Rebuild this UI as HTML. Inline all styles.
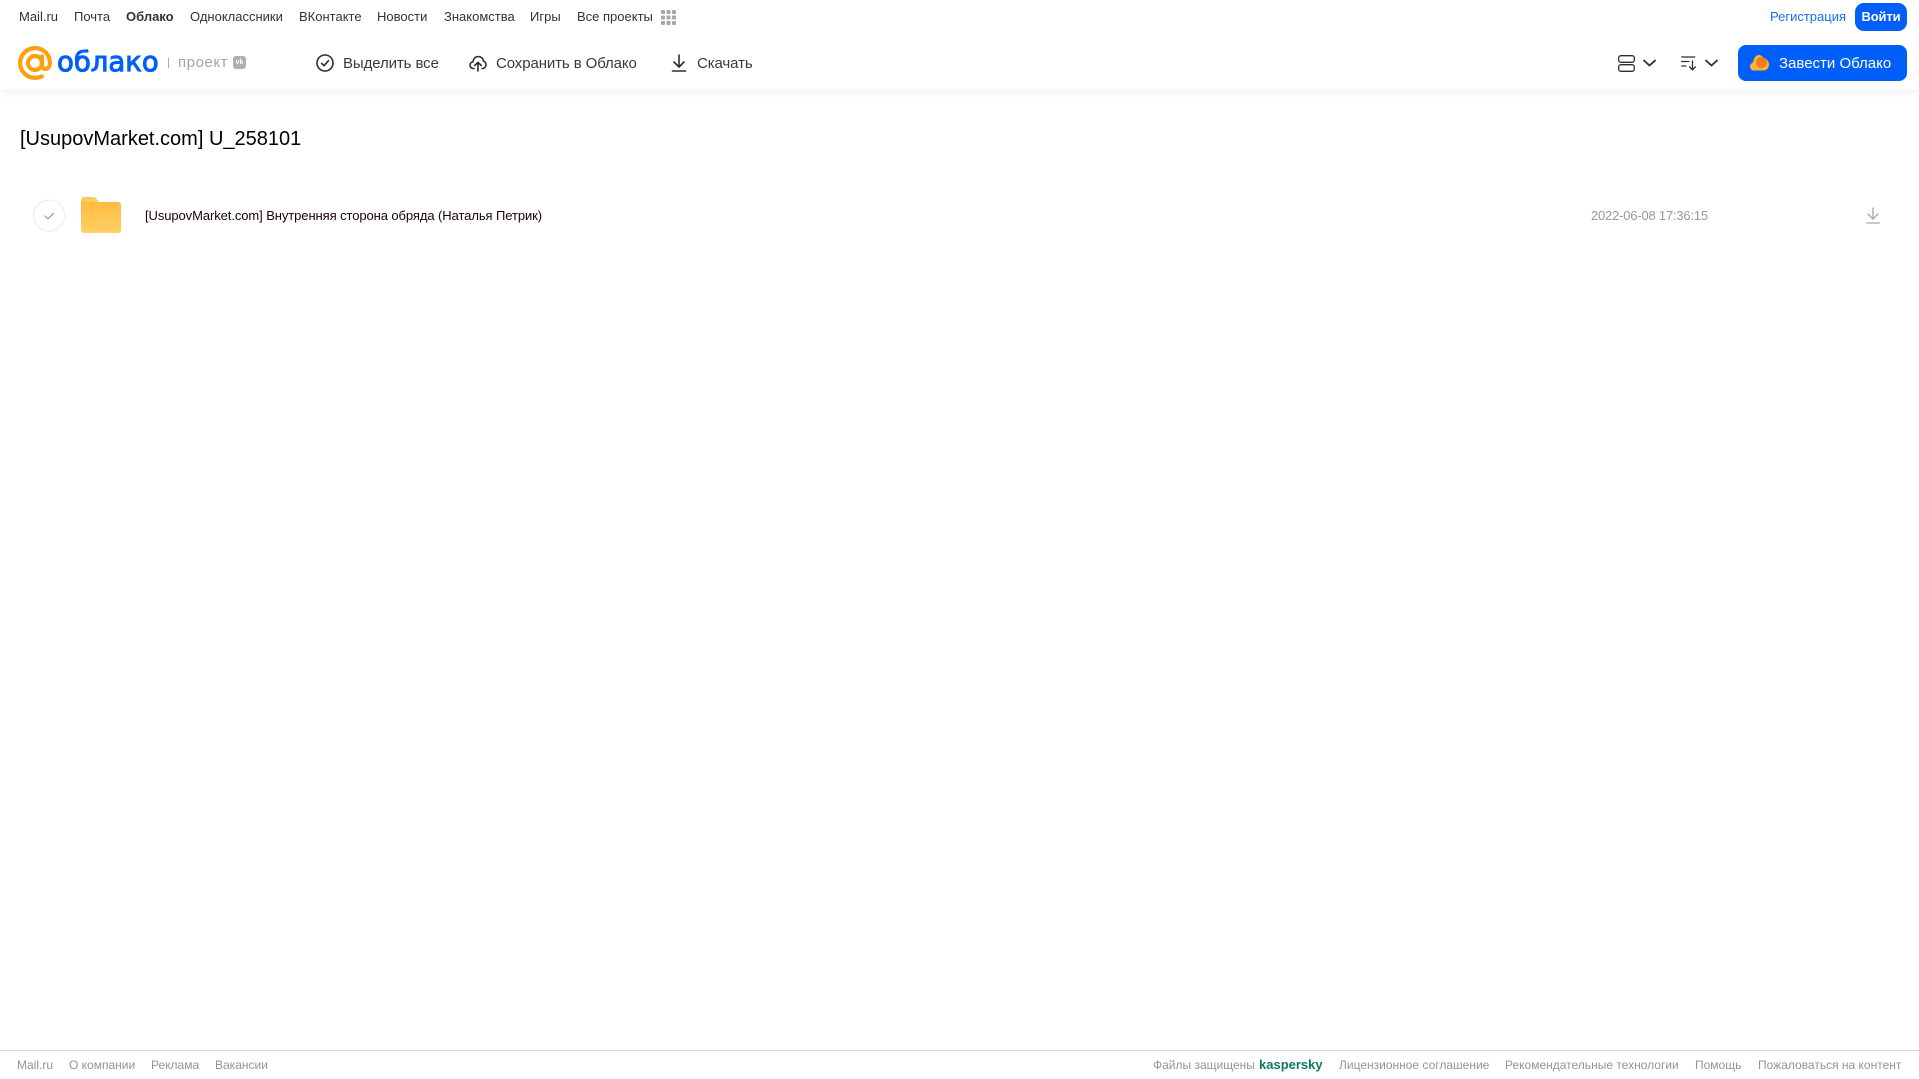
<!DOCTYPE html>
<html lang="ru">
<head>
<meta charset="utf-8">
<title>Облако</title>
<style>
html,body{margin:0;padding:0;background:#fff;}
body{width:1919px;height:1079px;position:relative;overflow:hidden;font-family:"Liberation Sans",sans-serif;}
.t{position:absolute;white-space:nowrap;line-height:16px;}
.n{top:9px;font-size:13px;color:#333;}
.h{top:55px;font-size:15px;line-height:18px;color:#3a3a3a;letter-spacing:-.1px;}
.f{top:1057px;font-size:12px;color:#949494;}
svg{position:absolute;overflow:visible;}
#hdr{position:absolute;left:0;top:0;width:1919px;height:90px;background:#fff;box-shadow:0 2px 8px rgba(0,0,0,.07);}
</style>
</head>
<body>
<div id="hdr"></div>

<span class="t n" style="left:19px">Mail.ru</span>
<span class="t n" style="left:74px">Почта</span>
<span class="t n" style="left:126px;font-weight:bold">Облако</span>
<span class="t n" style="left:190px">Одноклассники</span>
<span class="t n" style="left:299px">ВКонтакте</span>
<span class="t n" style="left:377px">Новости</span>
<span class="t n" style="left:444px">Знакомства</span>
<span class="t n" style="left:530px">Игры</span>
<span class="t n" style="left:577px">Все проекты</span>
<svg style="left:661px;top:10px" width="15" height="15" viewBox="0 0 15 15" fill="#a6a6a6">
<rect x="0" y="0" width="4" height="4" rx="1"/><rect x="5.5" y="0" width="4" height="4" rx="1"/><rect x="11" y="0" width="4" height="4" rx="1"/>
<rect x="0" y="5.5" width="4" height="4" rx="1"/><rect x="5.5" y="5.5" width="4" height="4" rx="1"/><rect x="11" y="5.5" width="4" height="4" rx="1"/>
<rect x="0" y="11" width="4" height="4" rx="1"/><rect x="5.5" y="11" width="4" height="4" rx="1"/><rect x="11" y="11" width="4" height="4" rx="1"/>
</svg>

<span class="t n" style="left:1770px;color:#1a6ff0">Регистрация</span>
<div style="position:absolute;left:1855px;top:3px;width:52px;height:28px;background:#005ff9;border-radius:9px;color:#fff;font-size:13px;font-weight:bold;line-height:27px;text-align:center;letter-spacing:-.15px">Войти</div>

<!-- logo -->
<svg style="left:18px;top:46px" width="34" height="34" viewBox="0 0 34 34" fill="none" stroke="#ffa10f" stroke-width="4.2" stroke-linecap="round">
<circle cx="17" cy="17" r="7"/>
<path d="M24 10.500v9c0 5 7.800 5 7.900-2.500C32 8.500 25.500 2.100 17 2.100 8.800 2.100 2.100 8.800 2.100 17S8.800 31.900 17 31.900c2.800 0 4.800-.5 6.800-1.500"/>
</svg>
<span class="t" style="left:57px;top:44px;font-family:'DejaVu Sans',sans-serif;font-size:27.5px;line-height:36px;color:#005ff9;-webkit-text-stroke:1px #005ff9">облако</span>
<div style="position:absolute;left:168px;top:58px;width:1px;height:10px;background:#aaa"></div>
<span class="t" style="left:178px;top:54px;font-size:15px;line-height:18px;color:#a5a5a5;letter-spacing:.55px">проект</span>
<div style="position:absolute;left:233px;top:56px;width:13px;height:13px;background:#b0b0b0;border-radius:3px;color:#fff;font-size:7px;font-weight:bold;line-height:13px;text-align:center">vk</div>

<!-- toolbar -->
<svg style="left:316px;top:54px" width="18" height="18" viewBox="0 0 18 18" fill="none" stroke="#2c2d2e" stroke-width="1.6" stroke-linecap="round" stroke-linejoin="round">
<circle cx="9" cy="9" r="8"/><path d="M5.600 9.300l2.400 2.400 4.500-5"/>
</svg>
<span class="t h" style="left:343px">Выделить все</span>
<svg style="left:469px;top:54px" width="18" height="18" viewBox="0 0 18 18" fill="none" stroke="#2c2d2e" stroke-width="1.6" stroke-linecap="round" stroke-linejoin="round">
<path d="M5 14.500H4.300C2.400 14.500 1 13 1 11.200c0-1.600 1.100-3 2.800-3.200C4.200 5 6.300 2.500 9.300 2.500c2.800 0 4.800 2 5.200 4.500 1.500.4 2.500 2.200 2.500 3.800 0 2-1.500 3.700-3.500 3.700H13"/>
<path d="M9 17V8.500M5.800 11.500L9 8.300l3.200 3.200"/>
</svg>
<span class="t h" style="left:496px">Сохранить в Облако</span>
<svg style="left:671px;top:54px" width="16" height="18" viewBox="0 0 16 18" fill="none" stroke="#2c2d2e" stroke-width="1.6" stroke-linecap="round" stroke-linejoin="round">
<path d="M8 1v11.500M3 8l5 5 5-5M1.500 17h13"/>
</svg>
<span class="t h" style="left:697px">Скачать</span>

<!-- view / sort -->
<svg style="left:1618px;top:55px" width="17" height="17" viewBox="0 0 17 17" fill="none" stroke="#2c2d2e" stroke-width="1.3">
<rect x=".7" y=".7" width="15.600" height="6.600" rx="2.200"/><rect x=".7" y="9.700" width="15.600" height="6.600" rx="2.200"/>
</svg>
<svg style="left:1643px;top:59px" width="13" height="8" viewBox="0 0 13 8" fill="none" stroke="#2c2d2e" stroke-width="1.8" stroke-linecap="round" stroke-linejoin="round"><path d="M1 1.500l5.500 5 5.500-5"/></svg>
<svg style="left:1681px;top:56px" width="17" height="15" viewBox="0 0 17 15" fill="none" stroke="#2c2d2e" stroke-width="1.300" stroke-linecap="round" stroke-linejoin="round">
<path d="M.8 1h13M.8 5.500h7M.8 10h4M11.500 5v8.500M8.500 10.800l3 3 3-3"/>
</svg>
<svg style="left:1705px;top:59px" width="13" height="8" viewBox="0 0 13 8" fill="none" stroke="#2c2d2e" stroke-width="1.8" stroke-linecap="round" stroke-linejoin="round"><path d="M1 1.500l5.500 5 5.500-5"/></svg>

<div style="position:absolute;left:1738px;top:45px;width:169px;height:36px;background:#005ff9;border-radius:8px"></div>
<svg style="left:1750px;top:54px" width="19" height="17" viewBox="0 0 19 17">
<path d="M4 16.500C1.800 16.500 0 14.800 0 12.500c0-2 1.300-3.500 3-3.900C3.400 4.500 6 1 8.500 1c2.500 0 3.800 1.200 4.800 3 3.200.3 5.700 3.300 5.700 6.500 0 3.500-2.500 6-5.500 6z" fill="#ffb13d"/>
<circle cx="11.500" cy="8.500" r="5.500" fill="#f4791f"/>
</svg>
<span class="t" style="left:1779px;top:55px;font-size:15px;line-height:18px;color:#fff">Завести Облако</span>

<!-- title -->
<span class="t" style="left:20px;top:126px;font-size:20px;line-height:26px;color:#000">[UsupovMarket.com] U_258101</span>

<!-- row -->
<svg style="left:33px;top:199px" width="33" height="33" viewBox="0 0 33 33" fill="none">
<circle cx="16" cy="16.500" r="15.500" stroke="#ececec"/>
<path d="M12 17l3 2.800 5.500-5.500" stroke="#a0a0a0" stroke-width="1.300" stroke-linecap="round" stroke-linejoin="round"/>
</svg>
<svg style="left:81px;top:197px" width="40" height="36" viewBox="0 0 40 36">
<defs><linearGradient id="g" x1="0" y1="0" x2="0" y2="1"><stop offset="0" stop-color="#ffbc40"/><stop offset="1" stop-color="#ffcf66"/></linearGradient></defs>
<path d="M0 3a3 3 0 0 1 3-3h9c2 0 3 1 4 2.500L18 5H0z" fill="#ffcb5c"/>
<path d="M0 5h37a3 3 0 0 1 3 3v25a3 3 0 0 1-3 3H3a3 3 0 0 1-3-3z" fill="url(#g)"/>
</svg>
<span class="t" style="left:145px;top:208px;font-size:13px;color:#1a0010;letter-spacing:-.085px">[UsupovMarket.com] Внутренняя сторона обряда (Наталья Петрик)</span>
<span class="t" style="left:1591px;top:208px;font-size:13px;color:#999;letter-spacing:-.2px">2022-06-08 17:36:15</span>
<svg style="left:1866px;top:207px" width="14" height="17" viewBox="0 0 14 17" fill="none" stroke="#a8a8a8" stroke-width="1.300" stroke-linecap="round" stroke-linejoin="round">
<path d="M7 1v10.500M2 7l5 5 5-5M.7 16h12.600"/>
</svg>

<!-- footer -->
<div style="position:absolute;left:0;top:1050px;width:1919px;height:1px;background:#d9d9d9"></div>
<span class="t f" style="left:17px">Mail.ru</span>
<span class="t f" style="left:69px">О компании</span>
<span class="t f" style="left:151px">Реклама</span>
<span class="t f" style="left:215px">Вакансии</span>
<span class="t f" style="left:1153px">Файлы защищены</span>
<span class="t f" style="left:1259px;color:#0e7a63;font-weight:bold;font-size:13px">kaspersky</span>
<span class="t f" style="left:1339px">Лицензионное соглашение</span>
<span class="t f" style="left:1505px">Рекомендательные технологии</span>
<span class="t f" style="left:1695px">Помощь</span>
<span class="t f" style="left:1758px">Пожаловаться на контент</span>
</body>
</html>
